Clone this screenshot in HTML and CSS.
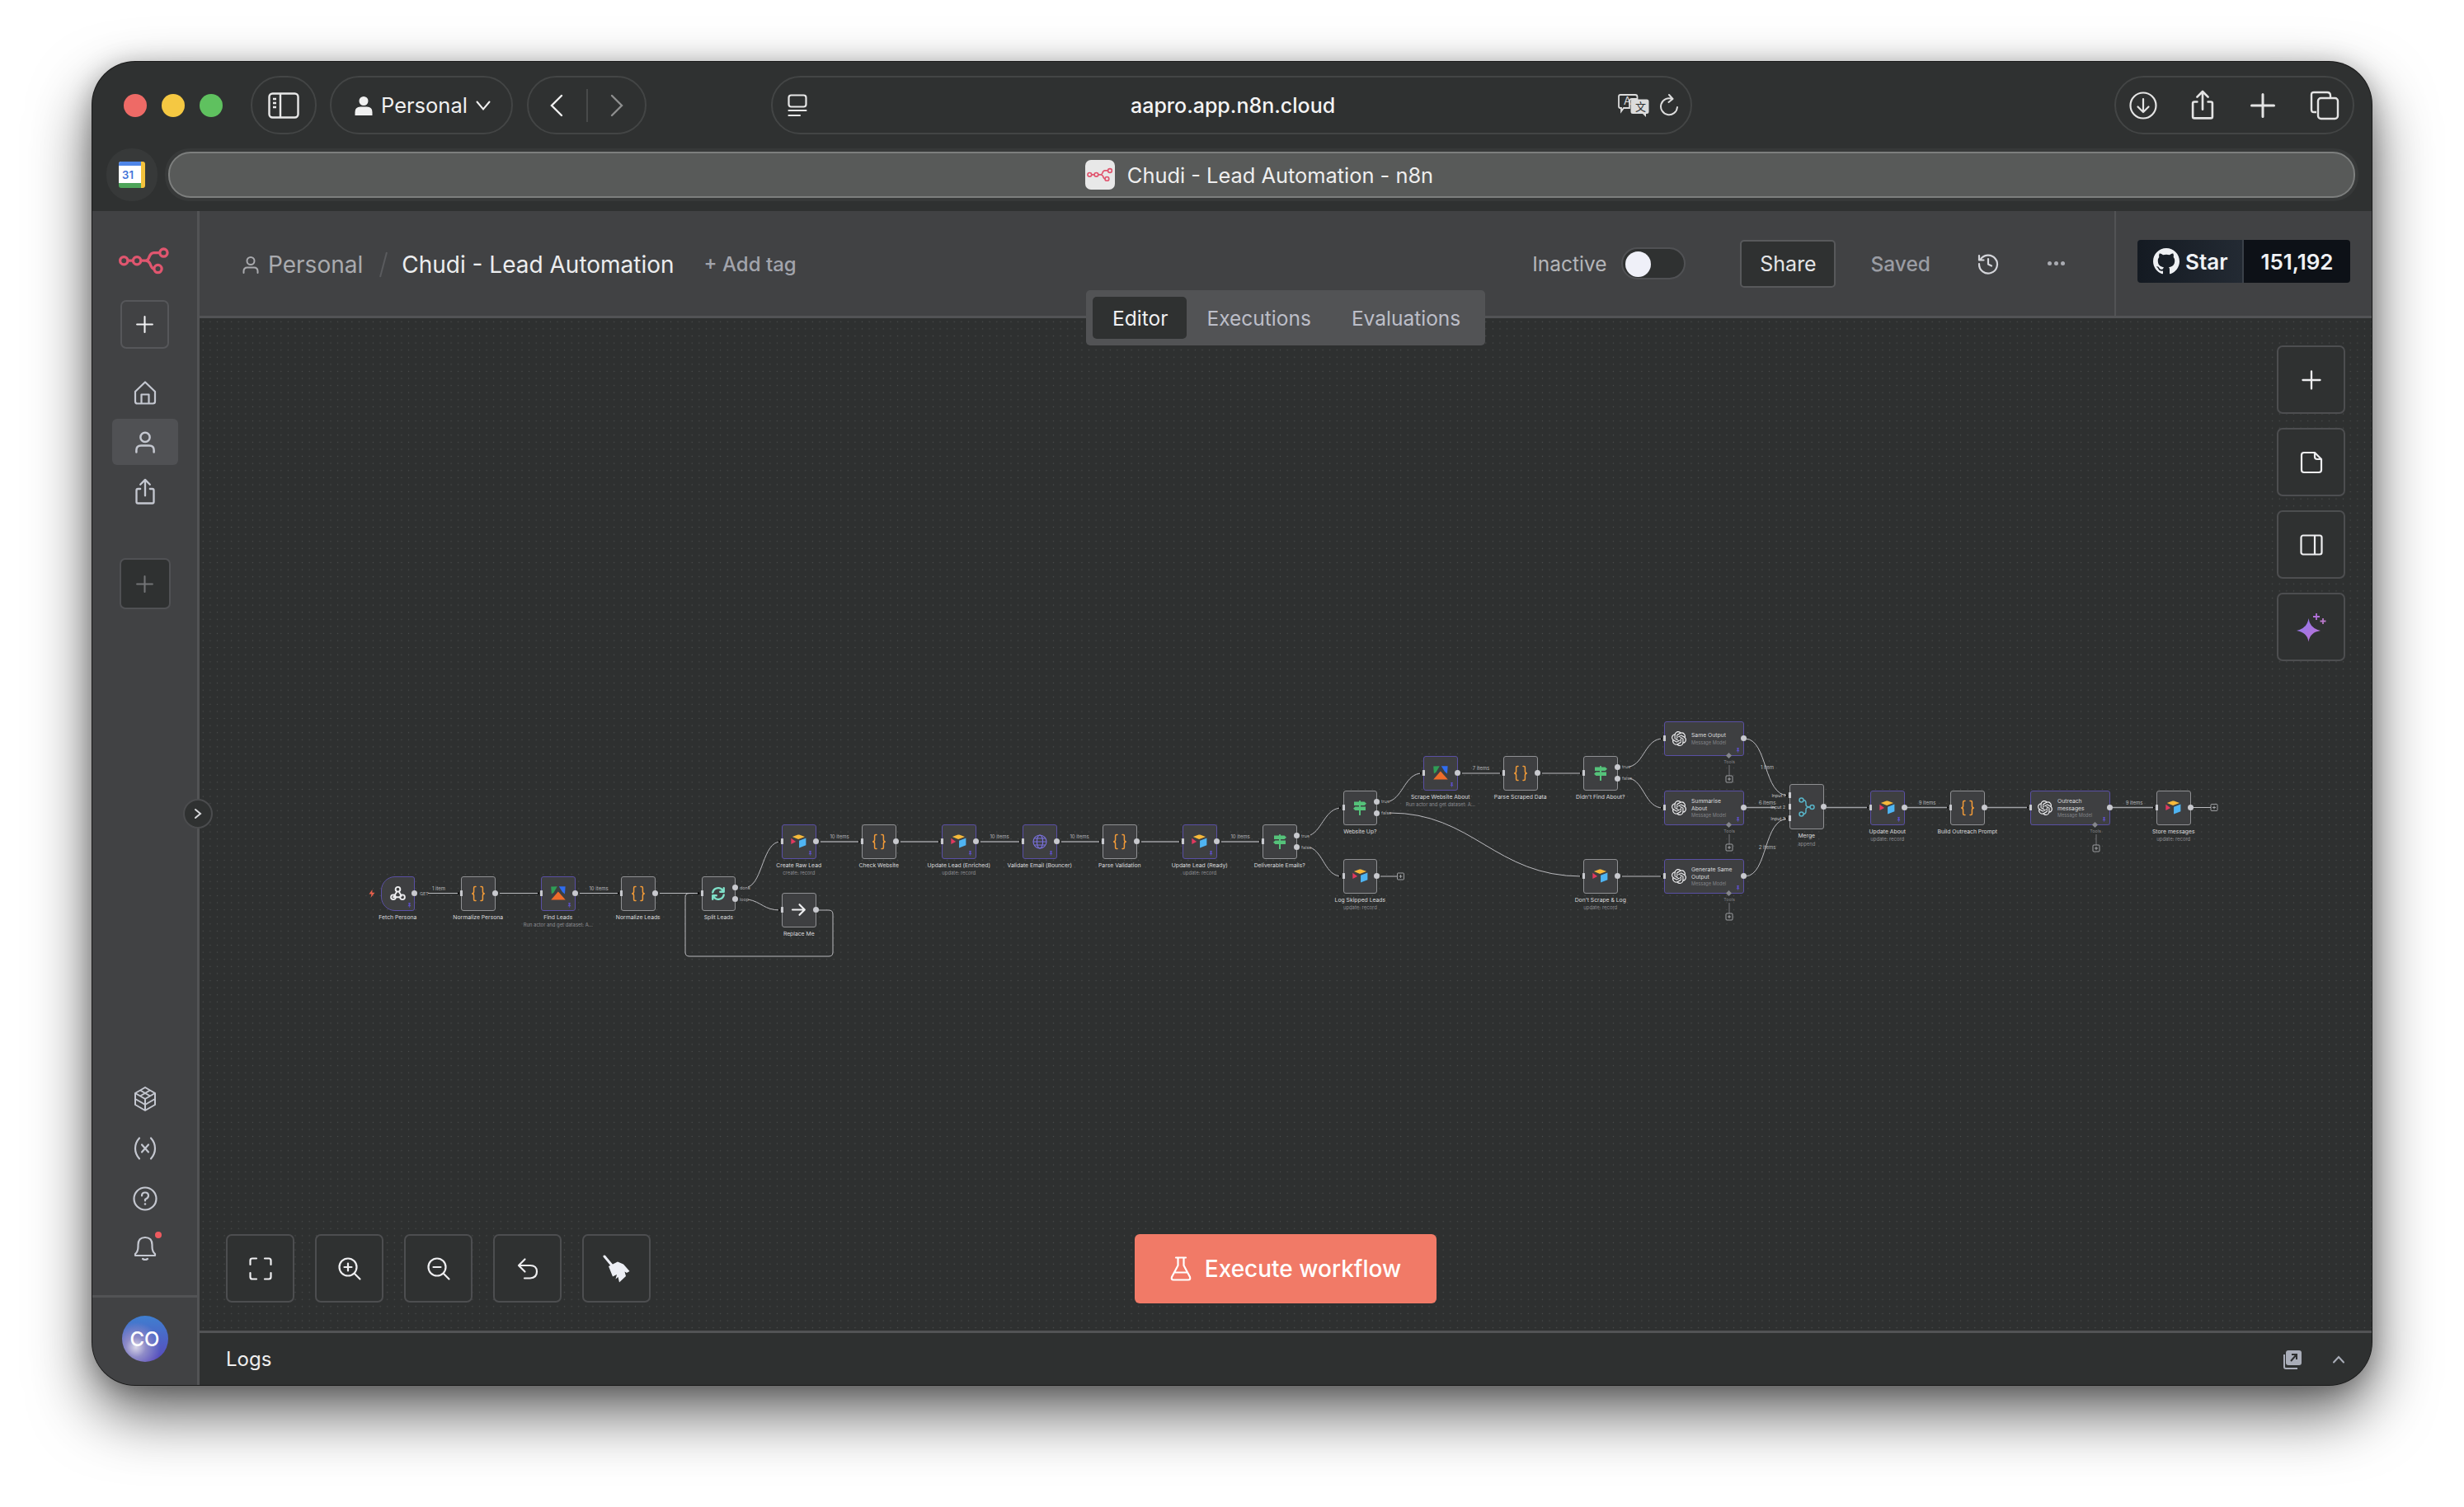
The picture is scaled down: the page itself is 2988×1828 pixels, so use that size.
FILE: index.html
```html
<!DOCTYPE html>
<html lang="en">
  <head>
    <meta charset="UTF-8" />
    <meta name="viewport" content="width=device-width, initial-scale=1.0" />
    <title>Chudi - Lead Automation - n8n</title>
    <link rel="stylesheet" href="styles.css">
  </head>
  <body>
    <!-- shared icons -->
    <svg class="defs" width="0" height="0">
      <symbol id="i-logo" viewBox="0 0 190 100">
        <g fill="none" stroke="#e0566f" stroke-width="10">
          <circle cx="20" cy="49" r="14" /><circle cx="68" cy="49" r="14" /><circle cx="166" cy="20" r="14" /><circle cx="145" cy="79" r="14" />
          <path d="M34 49H54M82 49H100Q108 49 112 38Q118 20 130 20H152M100 49Q110 49 116 60Q122 79 131 79" />
        </g>
      </symbol>
      <symbol id="i-code" viewBox="0 0 18 20">
        <path fill="none" stroke="#f29b38" stroke-width="1.5" stroke-linecap="round" d="M6 1.5H5Q3.6 1.5 3.6 3V7.6Q3.6 10 1.2 10Q3.6 10 3.6 12.4V17Q3.6 18.5 5 18.5H6M12 1.5H13Q14.4 1.5 14.4 3V7.6Q14.4 10 16.8 10Q14.4 10 14.4 12.4V17Q14.4 18.5 13 18.5H12" />
      </symbol>
      <symbol id="i-airtable" viewBox="0 0 20 18">
        <path fill="#f6b93b" d="M9 .6 1.9 3.3 9.6 6.4 18 3.3 10.8.6Q10 .3 9 .6Z" />
        <path fill="#e0395f" d="M.3 5v7.6L6.4 9.6Z" />
        <path fill="#4fb4f2" d="M10.6 8.2V17.6L19.4 14V4.8Z" />
      </symbol>
      <symbol id="i-apify" viewBox="0 0 18 17">
        <path fill="#2f9e56" d="M.2.4 7.8.2 3.6 7.4.9 9.6Z" />
        <path fill="#2f6df0" d="M9.8.2 17.6.3 17 9.4 14 7Z" />
        <path fill="#ef6c2a" d="M8.9 6.6 17.8 16.6H.2Z" />
      </symbol>
      <symbol id="i-switch" viewBox="0 0 18 18">
        <g fill="#55c27a">
          <rect x="8" y="0" width="2" height="18" rx=".6" />
          <path d="M2 1.5H14.6L17 3.7 14.6 5.9H2Z" />
          <path d="M16 7.6H3.4L1 9.8 3.4 12H16Z" />
        </g>
      </symbol>
      <symbol id="i-openai" viewBox="0 0 24 24">
        <path fill="#eeeef0" d="M22.2819 9.8211a5.9847 5.9847 0 0 0-.5157-4.9108 6.0462 6.0462 0 0 0-6.5098-2.9A6.0651 6.0651 0 0 0 4.9807 4.1818a5.9847 5.9847 0 0 0-3.9977 2.9 6.0462 6.0462 0 0 0 .7427 7.0966 5.98 5.98 0 0 0 .511 4.9107 6.051 6.051 0 0 0 6.5146 2.9001A5.9847 5.9847 0 0 0 13.2599 24a6.0557 6.0557 0 0 0 5.7718-4.2058 5.9894 5.9894 0 0 0 3.9977-2.9001 6.0557 6.0557 0 0 0-.7475-7.0729zm-9.022 12.6081a4.4755 4.4755 0 0 1-2.8764-1.0408l.1419-.0804 4.7783-2.7582a.7948.7948 0 0 0 .3927-.6813v-6.7369l2.02 1.1686a.071.071 0 0 1 .038.052v5.5826a4.504 4.504 0 0 1-4.4945 4.4944zm-9.6607-4.1254a4.4708 4.4708 0 0 1-.5346-3.0137l.142.0852 4.783 2.7582a.7712.7712 0 0 0 .7806 0l5.8428-3.3685v2.3324a.0804.0804 0 0 1-.0332.0615L9.74 19.9502a4.4992 4.4992 0 0 1-6.1408-1.6464zM2.3408 7.8956a4.485 4.485 0 0 1 2.3655-1.9728V11.6a.7664.7664 0 0 0 .3879.6765l5.8144 3.3543-2.0201 1.1685a.0757.0757 0 0 1-.071 0l-4.8303-2.7865A4.504 4.504 0 0 1 2.3408 7.872zm16.5963 3.8558L13.1038 8.364 15.1192 7.2a.0757.0757 0 0 1 .071 0l4.8303 2.7913a4.4944 4.4944 0 0 1-.6765 8.1042v-5.6772a.79.79 0 0 0-.407-.667zm2.0107-3.0231l-.142-.0852-4.7735-2.7818a.7759.7759 0 0 0-.7854 0L9.409 9.2297V6.8974a.0662.0662 0 0 1 .0284-.0615l4.8303-2.7866a4.4992 4.4992 0 0 1 6.6802 4.66zM8.3065 12.863l-2.02-1.1638a.0804.0804 0 0 1-.038-.0567V6.0742a4.4992 4.4992 0 0 1 7.3757-3.4537l-.142.0805L8.704 5.459a.7948.7948 0 0 0-.3927.6813zm1.0976-2.3654l2.602-1.4998 2.6069 1.4998v2.9994l-2.5974 1.4997-2.6067-1.4997Z" />
      </symbol>
      <symbol id="i-pin" viewBox="0 0 10 12">
        <path fill="#5c4fc4" d="M2.4 0H7.6V1.4L6.8 2V5.4L8.6 7.4V8.4H5.6V12H4.4V8.4H1.4V7.4L3.2 5.4V2L2.4 1.4Z" />
      </symbol>
      <symbol id="i-person" viewBox="0 0 24 24">
        <g fill="none" stroke="currentColor" stroke-width="2" stroke-linecap="round">
          <circle cx="12" cy="7.5" r="4.5" />
          <path d="M3.5 22V20Q3.5 15.5 8 15.5H16Q20.5 15.5 20.5 20V22" />
        </g>
      </symbol>
      <symbol id="i-plus" viewBox="0 0 24 24">
        <path fill="none" stroke="currentColor" stroke-width="2" stroke-linecap="round" d="M12 3V21M3 12H21" />
      </symbol>
      <symbol id="i-share" viewBox="0 0 24 28">
        <path fill="none" stroke="currentColor" stroke-width="2" stroke-linecap="round" stroke-linejoin="round" d="M7 11H4.5Q3 11 3 12.5V24.500Q3 26 4.5 26H19.5Q21 26 21 24.5V12.5Q21 11 19.5 11H17M12 18V2M7 6.5 12 1.5 17 6.5" />
      </symbol>
    </svg>

    <div class="window">
      <!-- browser chrome -->
      <div class="toolbar">
        <div class="lights"><i class="red"></i><i class="yellow"></i><i class="green"></i></div>
        <div class="pill pill-side">
          <svg width="38" height="32" viewBox="0 0 38 32"><g fill="none" stroke="#e8e8e8" stroke-width="2.4"><rect x="1.5" y="1.5" width="35" height="29" rx="4" /><path d="M15 1.5V30.5" /><path d="M6 8H10M6 13H10M6 18H10" /></g></svg>
        </div>
        <div class="pill pill-profile">
          <svg width="22" height="24" viewBox="0 0 22 24"><circle cx="11" cy="6.5" r="5.5" fill="#f0f0f0" /><path fill="#f0f0f0" d="M.5 24V20Q.5 13.5 7 13.5H15Q21.5 13.5 21.5 20V24Z" /></svg>
          <span>Personal</span>
          <svg width="18" height="12" viewBox="0 0 18 12"><path fill="none" stroke="#f0f0f0" stroke-width="2" stroke-linecap="round" d="M1.5 1.5 9 10.5 16.5 1.5" /></svg>
        </div>
        <div class="pill pill-nav">
          <svg width="18" height="28" viewBox="0 0 18 28"><path fill="none" stroke="#f0f0f0" stroke-width="2.4" stroke-linecap="round" d="M15 2 3 14 15 26" /></svg>
          <b class="nav-sep"></b>
          <svg width="18" height="28" viewBox="0 0 18 28"><path fill="none" stroke="#8d8e8e" stroke-width="2.4" stroke-linecap="round" d="M3 2 15 14 3 26" /></svg>
        </div>
        <div class="pill pill-url">
          <svg width="24" height="28" viewBox="0 0 24 28"><g fill="none" stroke="#e6e6e6" stroke-width="2.2" stroke-linecap="round"><rect x="1.5" y="1.5" width="21" height="14" rx="3" /><path d="M1.5 20H22.5M1.5 26H15" /></g></svg>
          <span class="url-text">aapro.app.n8n.cloud</span>
          <svg class="url-translate" width="38" height="28" viewBox="0 0 38 28">
            <path fill="none" stroke="#dcdcdc" stroke-width="1.8" d="M3 1H21Q23.5 1 23.5 3.5V6H17Q14 6 14 9V17H7L4 21V17H3Q1 17 1 15V3Q1 1 3 1Z" />
            <text class="tr-a" x="7" y="13">A</text>
            <path fill="#dcdcdc" d="M18 6.5H35Q37.5 6.5 37.5 9V22Q37.5 24 35 24H34V28L30 24H18Q15.5 24 15.5 22V9Q15.5 6.5 18 6.5Z" />
            <text class="tr-b" x="21" y="20">文</text>
          </svg>
          <svg class="url-reload" width="24" height="28" viewBox="0 0 24 28"><path fill="none" stroke="#dcdcdc" stroke-width="2" stroke-linecap="round" stroke-linejoin="round" d="M16 6A10 10 0 1 0 22 16M12 1 16.5 6 11.5 10" /></svg>
        </div>
        <div class="pill pill-actions">
          <svg width="34" height="34" viewBox="0 0 34 34"><g fill="none" stroke="#e4e4e4" stroke-width="2.2" stroke-linecap="round" stroke-linejoin="round"><circle cx="17" cy="17" r="15.5" /><path d="M17 9V25M10.5 18.5 17 25 23.5 18.5" /></g></svg>
          <svg width="32" height="37"><use href="#i-share" /></svg>
          <svg width="36" height="36"><use href="#i-plus" /></svg>
          <svg width="36" height="36" viewBox="0 0 36 36"><g fill="none" stroke="#e4e4e4" stroke-width="2.4"><path d="M8 26H5Q2 26 2 23V5Q2 2 5 2H21Q25 2 25 6V8" /><rect x="10" y="9" width="24" height="25" rx="3.5" /></g></svg>
        </div>
      </div>
      <div class="tabbar">
        <div class="tab-cal">
          <div class="cal">
            <span class="cal-num">31</span>
          </div>
        </div>
        <div class="tab-active">
          <div class="tab-inner">
            <div class="favicon"><svg width="32" height="18"><use href="#i-logo" /></svg></div>
            <span>Chudi - Lead Automation - n8n</span>
          </div>
        </div>
      </div>

      <!-- n8n app -->
      <div class="app">
        <aside class="sidebar">
          <svg class="logo" width="64" height="33"><use href="#i-logo" /></svg>
          <button class="add-btn"><svg width="25" height="25"><use href="#i-plus" /></svg></button>
          <nav class="side-nav">
            <div class="side-item">
              <svg width="28" height="29" viewBox="0 0 28 29"><g fill="none" stroke="#c4c7d0" stroke-width="2.2" stroke-linejoin="round"><path d="M2 13 14 1.5 26 13V25Q26 27.5 23.5 27.5H4.5Q2 27.5 2 25Z" /><path d="M9.5 27.5V16.5H18.5V27.5" /></g></svg>
            </div>
            <div class="side-item active"><svg width="30" height="30" class="soft"><use href="#i-person" /></svg></div>
            <div class="side-item"><svg width="28" height="33" class="soft"><use href="#i-share" /></svg></div>
          </nav>
          <button class="add-dark"><svg width="25" height="25"><use href="#i-plus" /></svg></button>
          <div class="side-bottom">
            <div class="side-item">
              <svg width="30" height="30" viewBox="0 0 30 30"><g fill="none" stroke="#c4c7d0" stroke-width="2" stroke-linejoin="round"><path d="M15 1 20 4 27 8V15L20 19 15 22 10 19 3 15V8L10 4Z" /><path d="M3 8 15 15 27 8M15 15V29M3 15V22L15 29 27 22V15" /><path d="M9 4.5 21 11.5M21 4.5 9 11.5" /></g></svg>
            </div>
            <div class="side-item">
              <svg width="26" height="28" viewBox="0 0 26 28"><g fill="none" stroke="#c4c7d0" stroke-width="2.2" stroke-linecap="round"><path d="M6 1.5Q1 7 1 14T6 26.5M20 1.5Q25 7 25 14T20 26.5" /><path d="M9 9.5 17 18.5M17 9.5 9 18.5" /></g></svg>
            </div>
            <div class="side-item">
              <svg width="30" height="30" viewBox="0 0 30 30"><circle cx="15" cy="15" r="13.5" fill="none" stroke="#c4c7d0" stroke-width="2.2" /><path fill="none" stroke="#c4c7d0" stroke-width="2.2" stroke-linecap="round" d="M11 11.5Q11 7.5 15 7.5T19 11.5Q19 14 15 16V17.5" /><circle cx="15" cy="21.5" r="1.3" fill="#c4c7d0" /></svg>
            </div>
            <div class="side-item">
              <svg width="28" height="30" viewBox="0 0 28 30"><g fill="none" stroke="#c4c7d0" stroke-width="2.2" stroke-linecap="round" stroke-linejoin="round"><path d="M2 22Q5.5 19 5.5 13V11Q5.5 2 14 2T22.5 11V13Q22.500 19 26 22V24H2Z" /><path d="M11 28Q14 30 17 28" /></g></svg>
              <i class="dot"></i>
            </div>
          </div>
          <div class="side-foot"><div class="avatar">CO</div></div>
        </aside>

        <main class="main">
          <header class="header">
            <div class="crumb">
              <svg width="24" height="24"><use href="#i-person" /></svg>
              <span>Personal</span>
            </div>
            <svg class="slash" width="12" height="32" viewBox="0 0 12 32"><path stroke="#5a5b5e" stroke-width="2" d="M10 1 2 31" /></svg>
            <span class="wf-name">Chudi - Lead Automation</span>
            <span class="add-tag">+ Add tag</span>
            <span class="status">Inactive</span>
            <div class="toggle"><i></i></div>
            <button class="share-btn">Share</button>
            <span class="saved">Saved</span>
            <svg class="history" width="26" height="26" viewBox="0 0 26 26"><g fill="none" stroke="#d4d5da" stroke-width="2.2" stroke-linecap="round" stroke-linejoin="round"><path d="M3.5 8A11 11 0 1 1 2 13M2 3V8.5H7.5" /><path d="M13 7V13.5L17 15.5" /></g></svg>
            <div class="more"><i></i><i></i><i></i></div>
            <div class="gh-wrap">
              <div class="gh-badge">
                <div class="gh-star">
                  <svg width="32" height="32" viewBox="0 0 24 24"><path fill="#eef0f3" d="M12 0c-6.626 0-12 5.373-12 12 0 5.302 3.438 9.8 8.207 11.387.599.111.793-.261.793-.577v-2.234c-3.338.726-4.033-1.416-4.033-1.416-.546-1.387-1.333-1.756-1.333-1.756-1.089-.745.083-.729.083-.729 1.205.084 1.839 1.237 1.839 1.237 1.07 1.834 2.807 1.304 3.492.997.107-.775.418-1.305.762-1.604-2.665-.305-5.467-1.334-5.467-5.931 0-1.311.469-2.381 1.236-3.221-.124-.303-.535-1.524.117-3.176 0 0 1.008-.322 3.301 1.23.957-.266 1.983-.399 3.003-.404 1.02.005 2.047.138 3.006.404 2.291-1.552 3.297-1.23 3.297-1.23.653 1.653.242 2.874.118 3.176.77.84 1.235 1.911 1.235 3.221 0 4.609-2.807 5.624-5.479 5.921.43.372.823 1.102.823 2.222v3.293c0 .319.192.694.801.576 4.765-1.589 8.199-6.086 8.199-11.386 0-6.627-5.373-12-12-12z" /></svg>
                  <span>Star</span>
                </div>
                <div class="gh-count">151,192</div>
              </div>
            </div>
          </header>

          <div class="view-tabs">
            <span class="view-tab on">Editor</span>
            <span class="view-tab">Executions</span>
            <span class="view-tab">Evaluations</span>
          </div>

          <button class="collapse"><svg width="10" height="14" viewBox="0 0 10 14"><path fill="none" stroke="#d8d9dc" stroke-width="2" stroke-linecap="round" d="M2 2 8 7 2 12" /></svg></button>

          <section class="canvas">
            <div class="graph">
              <svg class="edges" width="2400" height="340" viewBox="0 0 2400 340">
                <defs>
                  <marker id="tip" markerUnits="userSpaceOnUse" markerWidth="3.5" markerHeight="4" refX="3" refY="2" orient="auto"><path d="M0 0 3.5 2 0 4Z" fill="#0c0c0c" /></marker>
                </defs>
                <g class="lines" marker-end="url(#tip)">
                  <path d="M77 227.5H115.5" />
                  <path d="M164 227.5H212.5" />
                  <path d="M261 227.5H309.5" />
                  <path d="M358 227.5H407" />
                  <path d="M465 220C483 214 483 165 504.5 165" />
                  <path d="M465 235C482 238 484 248 504.5 248" />
                  <path class="thick" d="M553 165H601.5" />
                  <path class="thick" d="M650 165H698.5" />
                  <path class="thick" d="M747 165H796.5" />
                  <path class="thick" d="M845 165H893.5" />
                  <path class="thick" d="M942 165H990.5" />
                  <path class="thick" d="M1039 165H1087.5" />
                  <path d="M1147 157C1162 150 1165 124 1185 124" />
                  <path d="M1147 172C1163 178 1165 207 1185 207" />
                  <path d="M1243 116C1260 110 1262 82 1282.5 82" />
                  <path d="M1243 130C1345 130 1370 207 1476.5 207" />
                  <path d="M1331 82H1379.5" />
                  <path d="M1428 82H1476.5" />
                  <path d="M1534 74C1552 70 1553 40 1574.5 40" />
                  <path d="M1534 88C1552 92 1553 124 1574.5 124" />
                  <path d="M1525 207H1574.5" />
                  <path d="M1675 40C1702 42 1696 109 1726.5 109" />
                  <path class="thick" d="M1675 123.5H1714" />
                  <path d="M1675 207C1702 205 1696 137 1726.5 137" />
                  <path class="thick" d="M1773 123.5H1824.5" />
                  <path class="thick" d="M1870 123.5H1921.5" />
                  <path class="thick" d="M1968 123.5H2018.5" />
                  <path class="thick" d="M2120 123.5H2171.5" />
                </g>
                <g class="lines">
                  <path d="M547.5 248H563Q568 248 568 253V299Q568 304 563 304H394Q389 304 389 299V232.5Q389 227.5 394 227.5H400" />
                  <path d="M1232 207H1252" />
                  <path d="M2218 123.5H2239" />
                  <path class="tool" d="M1655 72V85M1655 156V168M1655 239V252M2100 156V169" />
                </g>
                <g class="plus-boxes">
                  <rect x="1252.5" y="203" width="8" height="8" rx="1" /><path d="M1254.5 207H1258.5M1256.5 205V209" />
                  <rect x="2239" y="119.5" width="8" height="8" rx="1" /><path d="M2241 123.5H2245M2243 121.5V125.5" />
                  <rect x="1651" y="85" width="8" height="8" rx="1" /><path d="M1653 89H1657M1655 87V91" />
                  <rect x="1651" y="168" width="8" height="8" rx="1" /><path d="M1653 172H1657M1655 170V174" />
                  <rect x="1651" y="252" width="8" height="8" rx="1" /><path d="M1653 256H1657M1655 254V258" />
                  <rect x="2096" y="169" width="8" height="8" rx="1" /><path d="M2098 173H2102M2100 171V175" />
                </g>
                <g class="edge-text">
                  <text x="90" y="224">1 item</text>
                  <text x="284" y="224">10 items</text>
                  <text x="576" y="161">10 items</text>
                  <text x="770" y="161">10 items</text>
                  <text x="867" y="161">10 items</text>
                  <text x="1062" y="161">10 items</text>
                  <text x="1354" y="78">7 items</text>
                  <text x="1701" y="77">1 item</text>
                  <text x="1701" y="120">6 items</text>
                  <text x="1701" y="174">2 items</text>
                  <text x="1895" y="120">9 items</text>
                  <text x="2146" y="120">9 items</text>
                </g>
                <g class="port-text">
                  <text x="67" y="229.5">GET</text>
                  <text x="455" y="222.5">done</text>
                  <text x="455" y="236.5">loop</text>
                  <text x="1136" y="159.5">true</text>
                  <text x="1136" y="173.5">false</text>
                  <text x="1233" y="118">true</text>
                  <text x="1233" y="132">false</text>
                  <text x="1525" y="76">true</text>
                  <text x="1525" y="90">false</text>
                  <text class="end" x="1723" y="111">Input 1</text>
                  <text class="end" x="1723" y="125">Input 2</text>
                  <text class="end" x="1723" y="139">Input 3</text>
                </g>
              </svg>

              <div class="node n-fetch pinned trigger">
                <div class="box">
                  <svg width="19" height="19" viewBox="0 0 24 24"><g fill="none" stroke="#eeeef0" stroke-width="2.4" stroke-linecap="round"><circle cx="12" cy="6" r="3.6" /><circle cx="5" cy="18" r="3.6" /><circle cx="19" cy="18" r="3.6" /><path d="M10.5 9.5 6.500 16M5 18H15.5M13.5 9.5 17.5 16" /></g></svg>
                  <svg class="pin"><use href="#i-pin" /></svg>
                </div>
                <div class="title">Fetch Persona</div>
              </div>
              <div class="node n-normp"><div class="box"><svg width="18" height="20"><use href="#i-code" /></svg></div><div class="title">Normalize Persona</div></div>
              <div class="node n-find pinned">
                <div class="box"><svg width="18" height="17"><use href="#i-apify" /></svg><svg class="pin"><use href="#i-pin" /></svg></div>
                <div class="title">Find Leads</div><div class="sub">Run actor and get dataset: A...</div>
              </div>
              <div class="node n-norml"><div class="box"><svg width="18" height="20"><use href="#i-code" /></svg></div><div class="title">Normalize Leads</div></div>
              <div class="node n-split two">
                <div class="box"><svg width="18" height="18" viewBox="0 0 24 24"><g fill="none" stroke="#7fe0c8" stroke-width="3.2" stroke-linecap="round" stroke-linejoin="round"><path d="M3 10A9 9 0 0 1 19 6.5L21 9M21 3V9H15" /><path d="M21 14A9 9 0 0 1 5 17.5L3 15M3 21V15H9" /></g></svg></div>
                <div class="title">Split Leads</div>
              </div>
              <div class="node n-create pinned">
                <div class="box"><svg width="19" height="17"><use href="#i-airtable" /></svg><svg class="pin"><use href="#i-pin" /></svg></div>
                <div class="title">Create Raw Lead</div><div class="sub">create: record</div>
              </div>
              <div class="node n-replace">
                <div class="box"><svg width="17" height="15" viewBox="0 0 17 15"><path fill="none" stroke="#eeeef0" stroke-width="2.2" stroke-linecap="round" stroke-linejoin="round" d="M1 7.5H15.5M9.5 1.2 15.8 7.5 9.5 13.8" /></svg></div>
                <div class="title">Replace Me</div>
              </div>
              <div class="node n-check"><div class="box"><svg width="18" height="20"><use href="#i-code" /></svg></div><div class="title">Check Website</div></div>
              <div class="node n-enriched pinned">
                <div class="box"><svg width="19" height="17"><use href="#i-airtable" /></svg><svg class="pin"><use href="#i-pin" /></svg></div>
                <div class="title">Update Lead (Enriched)</div><div class="sub">update: record</div>
              </div>
              <div class="node n-validate pinned">
                <div class="box">
                  <svg width="18" height="18" viewBox="0 0 18 18"><g fill="none" stroke="#7b72e0" stroke-width="1.1"><circle cx="9" cy="9" r="8" /><ellipse cx="9" cy="9" rx="3.6" ry="8" /><path d="M1 9H17M2.2 5H15.8M2.2 13H15.8" /></g></svg>
                  <svg class="pin"><use href="#i-pin" /></svg>
                </div>
                <div class="title">Validate Email (Bouncer)</div>
              </div>
              <div class="node n-parse"><div class="box"><svg width="18" height="20"><use href="#i-code" /></svg></div><div class="title">Parse Validation</div></div>
              <div class="node n-ready pinned">
                <div class="box"><svg width="19" height="17"><use href="#i-airtable" /></svg><svg class="pin"><use href="#i-pin" /></svg></div>
                <div class="title">Update Lead (Ready)</div><div class="sub">update: record</div>
              </div>
              <div class="node n-deliver two"><div class="box"><svg width="18" height="18"><use href="#i-switch" /></svg></div><div class="title">Deliverable Emails?</div></div>
              <div class="node n-webup two"><div class="box"><svg width="18" height="18"><use href="#i-switch" /></svg></div><div class="title">Website Up?</div></div>
              <div class="node n-log">
                <div class="box"><svg width="19" height="17"><use href="#i-airtable" /></svg></div>
                <div class="title">Log Skipped Leads</div><div class="sub">update: record</div>
              </div>
              <div class="node n-scrape pinned">
                <div class="box"><svg width="18" height="17"><use href="#i-apify" /></svg><svg class="pin"><use href="#i-pin" /></svg></div>
                <div class="title">Scrape Website About</div><div class="sub">Run actor and get dataset: A...</div>
              </div>
              <div class="node n-parses"><div class="box"><svg width="18" height="20"><use href="#i-code" /></svg></div><div class="title">Parse Scraped Data</div></div>
              <div class="node n-didnt two"><div class="box"><svg width="18" height="18"><use href="#i-switch" /></svg></div><div class="title">Didn't Find About?</div></div>
              <div class="node n-dont">
                <div class="box"><svg width="19" height="17"><use href="#i-airtable" /></svg></div>
                <div class="title">Don't Scrape &amp; Log</div><div class="sub">update: record</div>
              </div>

              <div class="node wide pinned n-same">
                <div class="box">
                  <svg width="18" height="18"><use href="#i-openai" /></svg>
                  <div class="wide-text"><div class="wide-title">Same Output</div><div class="wide-sub">Message Model</div></div>
                  <svg class="pin"><use href="#i-pin" /></svg><i class="diamond"></i>
                </div>
                <div class="tools">Tools</div>
              </div>
              <div class="node wide pinned n-summ">
                <div class="box">
                  <svg width="18" height="18"><use href="#i-openai" /></svg>
                  <div class="wide-text"><div class="wide-title">Summarise<br />About</div><div class="wide-sub">Message Model</div></div>
                  <svg class="pin"><use href="#i-pin" /></svg><i class="diamond"></i>
                </div>
                <div class="tools">Tools</div>
              </div>
              <div class="node wide pinned n-gen">
                <div class="box">
                  <svg width="18" height="18"><use href="#i-openai" /></svg>
                  <div class="wide-text"><div class="wide-title">Generate Same<br />Output</div><div class="wide-sub">Message Model</div></div>
                  <svg class="pin"><use href="#i-pin" /></svg><i class="diamond"></i>
                </div>
                <div class="tools">Tools</div>
              </div>

              <div class="node n-merge">
                <div class="box">
                  <svg width="20" height="24" viewBox="0 0 20 24"><g fill="none" stroke="#58b4c8" stroke-width="1.5"><circle cx="3.5" cy="3.5" r="2.5" /><circle cx="3.5" cy="20.5" r="2.5" /><circle cx="16.5" cy="12" r="2.5" /><path d="M6 3.5Q9 3.5 9 7.5V9Q9 12 14 12M6 20.5Q9 20.5 9 16.5V15Q9 12 14 12" /></g></svg>
                </div>
                <div class="title">Merge</div><div class="sub">append</div>
              </div>
              <div class="node n-about pinned">
                <div class="box"><svg width="19" height="17"><use href="#i-airtable" /></svg><svg class="pin"><use href="#i-pin" /></svg></div>
                <div class="title">Update About</div><div class="sub">update: record</div>
              </div>
              <div class="node n-build"><div class="box"><svg width="18" height="20"><use href="#i-code" /></svg></div><div class="title">Build Outreach Prompt</div></div>
              <div class="node wide pinned n-outreach">
                <div class="box">
                  <svg width="18" height="18"><use href="#i-openai" /></svg>
                  <div class="wide-text"><div class="wide-title">Outreach<br />messages</div><div class="wide-sub">Message Model</div></div>
                  <svg class="pin"><use href="#i-pin" /></svg><i class="diamond"></i>
                </div>
                <div class="tools">Tools</div>
              </div>
              <div class="node n-store">
                <div class="box"><svg width="19" height="17"><use href="#i-airtable" /></svg></div>
                <div class="title">Store messages</div><div class="sub">update: record</div>
              </div>

              <svg class="bolt" width="8" height="10" viewBox="0 0 8 10"><path fill="#e8604c" d="M4.5 0 .5 5.6H3.5L2.5 10 7.5 3.8H4.4Z" /></svg>
            </div>

            <!-- floating controls -->
            <div class="side-tools">
              <button class="tool-btn"><svg width="28" height="28" class="white"><use href="#i-plus" /></svg></button>
              <button class="tool-btn">
                <svg width="28" height="28" viewBox="0 0 28 28"><path fill="none" stroke="#eeeef0" stroke-width="2.2" stroke-linejoin="round" d="M5 2H18L26 10V23Q26 26 23 26H5Q2 26 2 23V5Q2 2 5 2ZM18 2V7Q18 10 21 10H26" /></svg>
              </button>
              <button class="tool-btn">
                <svg width="28" height="26" viewBox="0 0 28 26"><g fill="none" stroke="#eeeef0" stroke-width="2.2"><rect x="1.5" y="1.5" width="25" height="23" rx="2.5" /><path d="M18 1.5V24.5" /></g></svg>
              </button>
              <button class="tool-btn">
                <svg width="38" height="38" viewBox="0 0 38 38">
                  <defs><linearGradient id="spark" x1="0" y1="0" x2="1" y2="1"><stop offset="0" stop-color="#8c7bf0" /><stop offset="1" stop-color="#c070d0" /></linearGradient></defs>
                  <path fill="url(#spark)" d="M15.5 8Q17 20 30 23Q17 25 15.5 36.5Q14 25 1 23Q14 20 15.5 8Z" />
                  <path stroke="#b070d8" stroke-width="1.8" d="M25 2V10M21 6H29" />
                  <path stroke="#b878c8" stroke-width="1.8" d="M33 8V15M29.5 11.5H36.5" />
                </svg>
              </button>
            </div>

            <div class="zoom-tools">
              <button class="tool-btn">
                <svg width="28" height="28" viewBox="0 0 28 28"><path fill="none" stroke="#eeeef0" stroke-width="2.2" stroke-linecap="round" d="M1.5 9V4Q1.5 1.5 4 1.5H9M19 1.5H24Q26.5 1.5 26.5 4V9M26.5 19V24Q26.5 26.5 24 26.5H19M9 26.5H4Q1.5 26.5 1.5 24V19" /></svg>
              </button>
              <button class="tool-btn">
                <svg width="28" height="28" viewBox="0 0 28 28"><g fill="none" stroke="#eeeef0" stroke-width="2.2" stroke-linecap="round"><circle cx="12" cy="12" r="10.5" /><path d="M20 20 26.5 26.5M12 7.5V16.5M7.5 12H16.5" /></g></svg>
              </button>
              <button class="tool-btn">
                <svg width="28" height="28" viewBox="0 0 28 28"><g fill="none" stroke="#eeeef0" stroke-width="2.2" stroke-linecap="round"><circle cx="12" cy="12" r="10.5" /><path d="M20 20 26.5 26.5M7.5 12H16.5" /></g></svg>
              </button>
              <button class="tool-btn">
                <svg width="26" height="26" viewBox="0 0 26 26"><path fill="none" stroke="#eeeef0" stroke-width="2.2" stroke-linecap="round" stroke-linejoin="round" d="M9.5 1.5 2 9 9.500 16.5M2 9H16Q24 9 24 16.5T16 24.5H9" /></svg>
              </button>
              <button class="tool-btn">
                <svg width="36" height="36" viewBox="0 0 36 36"><path fill="#eceef4" d="M8 15 19 9.500 26 12.500 33.500 21 30 23 27.500 21.500 29 27 21 34.500 19.500 28 16.500 30.500 18 25 13 27.500Z" /><path stroke="#eceef4" stroke-width="3" stroke-linecap="round" d="M3 3 13 15" /></svg>
              </button>
            </div>

            <button class="execute">
              <svg width="26" height="30" viewBox="0 0 26 30"><path fill="none" stroke="#fff" stroke-width="2.2" stroke-linejoin="round" stroke-linecap="round" d="M7 1.5H19M9.5 1.5V11L2 25Q1 28.5 4 28.5H22Q25 28.5 24 25L16.5 11V1.5M6 19.5H20" /></svg>
              <span>Execute workflow</span>
            </button>
          </section>

          <footer class="logs">
            <span>Logs</span>
            <div class="logs-actions">
              <svg width="24" height="24" viewBox="0 0 24 24"><rect x="4" y="1" width="19" height="18" rx="3" fill="#a9adb8" /><path fill="none" stroke="#a9adb8" stroke-width="2" d="M2 6V21Q2 23 4 23H18" /><path fill="none" stroke="#2e3030" stroke-width="2" d="M10 14 17 6M11 6H17V12" /></svg>
              <svg width="16" height="10" viewBox="0 0 16 10"><path fill="none" stroke="#a9adb8" stroke-width="2" stroke-linecap="round" d="M2 8.5 8 2 14 8.5" /></svg>
            </div>
          </footer>
        </main>
      </div>
    </div>
  </body>
</html>
```

FILE: styles.css
```css
* {
  margin: 0;
  padding: 0;
  box-sizing: border-box;
}

html,
body {
  width: 2988px;
  height: 1828px;
  overflow: hidden;
  background-color: #fff;
  font-family: Inter, "Liberation Sans", sans-serif;
}

.defs {
  position: absolute;
}

button {
  font-family: inherit;
  cursor: pointer;
}

svg {
  flex: none;
  overflow: visible;
}

.window {
  width: 2764px;
  height: 1605px;
  margin: 75px 0 0 112px;
  display: flex;
  flex-direction: column;
  background-color: #2f3131;
  border-radius: 52px;
  overflow: hidden;
  box-shadow: 0 0 0 1px #1a1a1a, 0 34px 75px rgba(0, 0, 0, 0.62), 0 4px 30px rgba(0, 0, 0, 0.25);
}

/* browser chrome */
.toolbar {
  height: 105px;
  padding-top: 17px;
  display: flex;
  align-items: flex-start;
  flex: none;
}
.lights {
  display: flex;
  gap: 18px;
  height: 71px;
  padding-left: 38px;
  align-items: center;
}
.lights i {
  width: 28px;
  height: 28px;
  border-radius: 50%;
}
.red {
  background-color: #ee6a66;
}
.yellow {
  background-color: #f5c842;
}
.green {
  background-color: #5fc15f;
}
.pill {
  height: 71px;
  display: flex;
  align-items: center;
  border: 2px solid #434545;
  border-radius: 36px;
  color: #f0f0f0;
  font-size: 25.5px;
}
.pill-side {
  width: 80px;
  margin-left: 34px;
  justify-content: center;
}
.pill-profile {
  width: 222px;
  margin-left: 16px;
  padding-left: 28px;
  gap: 10px;
}
.pill-nav {
  width: 145px;
  margin-left: 17px;
  padding: 0 25px;
  justify-content: space-between;
}
.nav-sep {
  width: 2px;
  height: 40px;
  background-color: #484a4a;
}
.pill-url {
  width: 1117px;
  margin-left: 151px;
  padding: 0 14px 0 18px;
  position: relative;
}
.url-text {
  position: absolute;
  left: 434px;
  font-weight: 500;
  font-size: 25px;
  color: #f4f4f4;
}
.url-translate {
  margin-left: auto;
}
.url-reload {
  margin-left: 12px;
}
.tr-a {
  font-size: 13px;
  fill: #dcdcdc;
}
.tr-b {
  font-family: "Noto Sans CJK SC", sans-serif;
  font-size: 13px;
  fill: #2f3131;
}
.pill-actions {
  width: 291px;
  margin-left: auto;
  margin-right: 21px;
  padding: 0 16px;
  justify-content: space-between;
  color: #e4e4e4;
}
.tabbar {
  height: 76px;
  padding: 0 16px 0 17px;
  display: flex;
  gap: 9px;
  flex: none;
}
.tab-cal {
  width: 62px;
  height: 64px;
  display: flex;
  align-items: center;
  justify-content: center;
  background-color: #373939;
  border-radius: 30px;
}
.cal {
  width: 32px;
  height: 32px;
  padding: 5px 5px 6px 0;
  background: linear-gradient(#4f86e8 5px, transparent 5px), linear-gradient(to top, #4ea45a 6px, #fff 6px);
  border-right: 5px solid #f4c23c;
  border-radius: 3px;
  display: flex;
  align-items: center;
  justify-content: center;
}
.cal-num {
  font-size: 13px;
  font-weight: 600;
  color: #3f73d8;
}
.tab-active {
  flex: 1;
  height: 64px;
  padding: 4px;
  background-color: #373939;
  border-radius: 30px;
}
.tab-inner {
  height: 56px;
  display: flex;
  align-items: center;
  justify-content: center;
  gap: 15px;
  padding-right: 6px;
  color: #eeeeee;
  font-size: 25.4px;
  background-color: #585a59;
  border: 2px solid #7d7f7e;
  border-radius: 27px;
}
.favicon {
  width: 36px;
  height: 36px;
  display: flex;
  align-items: center;
  justify-content: center;
  background-color: #e8e8e8;
  border-radius: 7px;
}

/* n8n app */
.app {
  flex: 1;
  display: flex;
  min-height: 0;
}
.sidebar {
  width: 130px;
  flex: none;
  display: flex;
  flex-direction: column;
  align-items: center;
  padding-top: 44px;
  background-color: #414244;
  border-right: 3px solid #525355;
}
.logo {
  margin-left: -1px;
}
.add-btn {
  width: 59px;
  height: 59px;
  margin-top: 31px;
  display: flex;
  align-items: center;
  justify-content: center;
  background: none;
  border: 2px solid #56575a;
  border-radius: 7px;
  color: #f2f2f4;
}
.side-nav {
  margin-top: 25px;
  display: flex;
  flex-direction: column;
  gap: 4px;
}
.side-item {
  width: 80px;
  height: 56px;
  display: flex;
  align-items: center;
  justify-content: center;
  border-radius: 6px;
  position: relative;
}
.side-item.active {
  background-color: #505154;
}
.soft {
  color: #c4c7d0;
}
.add-dark {
  width: 62px;
  height: 62px;
  margin-top: 53px;
  display: flex;
  align-items: center;
  justify-content: center;
  background-color: #2f3131;
  border: 2px solid #505154;
  border-radius: 7px;
  color: #737476;
}
.side-bottom {
  margin-top: auto;
  display: flex;
  flex-direction: column;
  gap: 4.5px;
  padding-bottom: 29px;
}
.dot {
  position: absolute;
  right: 20px;
  top: 8px;
  width: 8px;
  height: 8px;
  background-color: #ee5a5f;
  border-radius: 50%;
}
.side-foot {
  width: 100%;
  height: 109px;
  padding-top: 22px;
  display: flex;
  justify-content: center;
  border-top: 3px solid #525355;
}
.avatar {
  width: 56px;
  height: 56px;
  display: flex;
  align-items: center;
  justify-content: center;
  color: #fff;
  font-size: 24px;
  font-weight: 500;
  background: radial-gradient(circle at 30% 68%, #d8d6e8 0, #8f8cc8 22%, transparent 55%), linear-gradient(#3f7fd0, #5a49bc);
  border-radius: 50%;
}

.main {
  flex: 1;
  min-width: 0;
  display: flex;
  flex-direction: column;
  position: relative;
}
.header {
  height: 130px;
  flex: none;
  display: flex;
  align-items: center;
  padding-left: 50px;
  background-color: #414244;
  border-bottom: 3px solid #525355;
  font-size: 24.5px;
}
.crumb {
  display: flex;
  align-items: center;
  gap: 9px;
  margin-top: 2px;
  color: #a9aaae;
  font-size: 28px;
}
.slash {
  margin-left: 19px;
  margin-top: 2px;
}
.wf-name {
  margin-left: 16px;
  margin-top: 2px;
  color: #ecedef;
  font-size: 28px;
}
.add-tag {
  margin-left: 36px;
  margin-top: 2px;
  color: #a2a4ac;
  font-size: 24px;
  font-weight: 500;
}
.status {
  margin-left: auto;
  color: #b4b5b9;
}
.toggle {
  width: 78px;
  height: 39px;
  margin-left: 18px;
  padding: 3px;
  background-color: #2f3131;
  border: 2px solid #505154;
  border-radius: 20px;
}
.toggle i {
  display: block;
  width: 31px;
  height: 31px;
  background-color: #eff0f8;
  border-radius: 50%;
}
.share-btn {
  width: 116px;
  height: 58px;
  margin-left: 66px;
  color: #e4e4e6;
  font-size: 25px;
  background-color: #2f3131;
  border: 2px solid #58595b;
  border-radius: 5px;
}
.saved {
  margin-left: 42px;
  color: #9a9ca3;
  font-weight: 500;
}
.history {
  margin-left: 57px;
}
.more {
  margin-left: 59px;
  display: flex;
  gap: 3px;
}
.more i {
  width: 5px;
  height: 5px;
  background-color: #a9abb2;
  border-radius: 50%;
}
.gh-wrap {
  width: 312px;
  height: 100%;
  margin-left: 60px;
  padding: 35px 0 0 26px;
  border-left: 2px solid #525355;
}
.gh-badge {
  width: 258px;
  height: 52px;
  display: flex;
  font-size: 26px;
  font-weight: 600;
  color: #f0f2f5;
  border-radius: 4px;
  overflow: hidden;
}
.gh-star {
  width: 129px;
  display: flex;
  align-items: center;
  gap: 7px;
  padding-left: 19px;
  background: linear-gradient(to right, #141a22, #232a33);
  border-right: 2px solid #3a4048;
}
.gh-count {
  flex: 1;
  display: flex;
  align-items: center;
  justify-content: center;
  background-color: #0d1117;
}

.view-tabs {
  position: absolute;
  left: 1075px;
  top: 96px;
  width: 484px;
  height: 67px;
  padding: 8px;
  display: flex;
  align-items: flex-start;
  background-color: #525355;
  border-radius: 5px;
  z-index: 3;
}
.view-tab {
  height: 51px;
  padding: 0 24.5px;
  display: flex;
  align-items: center;
  color: #bcbec8;
  font-size: 24.5px;
}
.view-tab.on {
  width: 114px;
  padding: 0 24px;
  color: #f0f0f2;
  background-color: #2f3131;
  border-radius: 5px;
}
.collapse {
  position: absolute;
  left: -20px;
  top: 713px;
  width: 36px;
  height: 36px;
  display: flex;
  align-items: center;
  justify-content: center;
  background-color: #2f3131;
  border: 2px solid #4b4c4e;
  border-radius: 50%;
  z-index: 3;
}

/* workflow canvas */
.canvas {
  flex: 1;
  position: relative;
  overflow: hidden;
  background-color: #2e3030;
  background-image: radial-gradient(circle, #4b4d4d 0.7px, transparent 1px);
  background-size: 8.6px 8.6px;
}
.graph {
  position: absolute;
  left: 200px;
  top: 470px;
  width: 2400px;
  height: 340px;
}
.edges {
  position: absolute;
  left: 0;
  top: 0;
}
.lines path {
  fill: none;
  stroke: #c9cace;
  stroke-width: 0.9;
}
.lines path.thick {
  stroke: #a0a1a5;
  stroke-width: 1.4;
}
.lines path.tool {
  stroke: #8b8c90;
  stroke-width: 0.8;
}
.plus-boxes rect,
.plus-boxes path {
  fill: #2e3030;
  stroke: #b8b9bd;
  stroke-width: 0.8;
}
.edge-text text {
  font-size: 6px;
  text-anchor: middle;
  fill: #b4b5b8;
}
.port-text text {
  font-size: 5.4px;
  fill: #a9aaad;
}
.port-text text.end {
  text-anchor: end;
  fill: #c2c3c6;
}

.node {
  position: absolute;
  width: 41.5px;
  display: flex;
  flex-direction: column;
  align-items: center;
}
.box {
  width: 100%;
  height: 41.5px;
  flex: none;
  position: relative;
  display: flex;
  align-items: center;
  justify-content: center;
  background-color: #3e3f41;
  border: 1px solid #8f9093;
  border-radius: 3px;
}
.pinned .box {
  border-color: #5a50a4;
}
.box::before {
  content: "";
  position: absolute;
  left: -2px;
  top: 50%;
  width: 3px;
  height: 7px;
  margin-top: -3.5px;
  background-color: #c8c9ce;
  border-radius: 0.5px;
}
.box::after {
  content: "";
  position: absolute;
  right: -4px;
  top: 50%;
  width: 7px;
  height: 7px;
  margin-top: -3.5px;
  background-color: #c8c9ce;
  border-radius: 50%;
}
.two .box::after {
  margin-top: -10.5px;
  box-shadow: 0 14px 0 #c8c9ce;
}
.trigger .box {
  border-radius: 17px 3px 3px 17px;
}
.trigger .box::before {
  display: none;
}
.pin {
  position: absolute;
  right: 3.5px;
  bottom: 3px;
  width: 5px;
  height: 6px;
}
.title {
  margin-top: 4px;
  flex: none;
  color: #dcdcdf;
  font-size: 6.8px;
  line-height: 8px;
  white-space: nowrap;
}
.sub {
  margin-top: 1.5px;
  flex: none;
  color: #8b8c90;
  font-size: 5.9px;
  line-height: 7px;
  white-space: nowrap;
}

.wide {
  width: 96.5px;
}
.wide .box {
  justify-content: flex-start;
  padding-left: 8px;
  gap: 6px;
}
.wide-text {
  min-width: 0;
}
.wide-title {
  color: #dcdcdf;
  font-size: 6.8px;
  line-height: 9px;
  white-space: nowrap;
}
.wide-sub {
  margin-top: 1.5px;
  color: #808185;
  font-size: 5.6px;
  line-height: 7px;
  white-space: nowrap;
}
.diamond {
  position: absolute;
  left: 50%;
  margin-left: 28.2px;
  bottom: -3.5px;
  width: 5px;
  height: 5px;
  background-color: #85868c;
  transform: rotate(45deg);
}
.tools {
  margin-top: 4px;
  margin-left: 61.5px;
  color: #808185;
  font-size: 5.4px;
  line-height: 7px;
}

.n-fetch { left: 19.6px; top: 207px; }
.n-normp { left: 117px; top: 207px; }
.n-find { left: 214px; top: 207px; }
.n-norml { left: 311px; top: 207px; }
.n-split { left: 408.6px; top: 207px; }
.n-create { left: 506px; top: 144px; }
.n-replace { left: 506px; top: 227px; }
.n-check { left: 603px; top: 144px; }
.n-enriched { left: 700px; top: 144px; }
.n-validate { left: 798px; top: 144px; }
.n-parse { left: 895px; top: 144px; }
.n-ready { left: 992px; top: 144px; }
.n-deliver { left: 1089px; top: 144px; }
.n-webup { left: 1186.6px; top: 103px; }
.n-log { left: 1186.6px; top: 186px; }
.n-scrape { left: 1284px; top: 61px; }
.n-parses { left: 1381px; top: 61px; }
.n-didnt { left: 1478px; top: 61px; }
.n-dont { left: 1478px; top: 186px; }
.n-same { left: 1576px; top: 19px; }
.n-summ { left: 1576px; top: 103px; }
.n-gen { left: 1576px; top: 186px; }
.n-about { left: 1826px; top: 103px; }
.n-build { left: 1923px; top: 103px; }
.n-outreach { left: 2020px; top: 103px; }
.n-store { left: 2173px; top: 103px; }
.n-merge { left: 1728px; top: 95px; }
.n-merge .box {
  height: 55px;
}
.n-merge .box::before {
  box-shadow: 0 14px 0 #c8c9ce, 0 -14px 0 #c8c9ce;
}
.bolt {
  position: absolute;
  left: 5px;
  top: 223px;
}

/* floating controls */
.tool-btn {
  width: 83px;
  height: 83px;
  display: flex;
  align-items: center;
  justify-content: center;
  background-color: #2f3131;
  border: 2px solid #4d4e50;
  border-radius: 7px;
}
.tool-btn .white {
  color: #eeeef0;
}
.side-tools {
  position: absolute;
  right: 32px;
  top: 33px;
  display: flex;
  flex-direction: column;
  gap: 17px;
}
.zoom-tools {
  position: absolute;
  left: 32px;
  bottom: 34px;
  display: flex;
  gap: 25px;
}
.execute {
  position: absolute;
  left: 1134px;
  bottom: 33px;
  width: 366px;
  height: 84px;
  display: flex;
  align-items: center;
  justify-content: center;
  gap: 16px;
  color: #fff;
  font-size: 28px;
  font-weight: 500;
  background-color: #f17a67;
  border: none;
  border-radius: 6px;
}

.logs {
  height: 66px;
  flex: none;
  display: flex;
  align-items: center;
  padding: 0 32px;
  color: #eeeeee;
  font-size: 24px;
  background-color: #2e3030;
  border-top: 3px solid #525355;
}
.logs-actions {
  margin-left: auto;
  display: flex;
  align-items: center;
  gap: 36px;
}
```
